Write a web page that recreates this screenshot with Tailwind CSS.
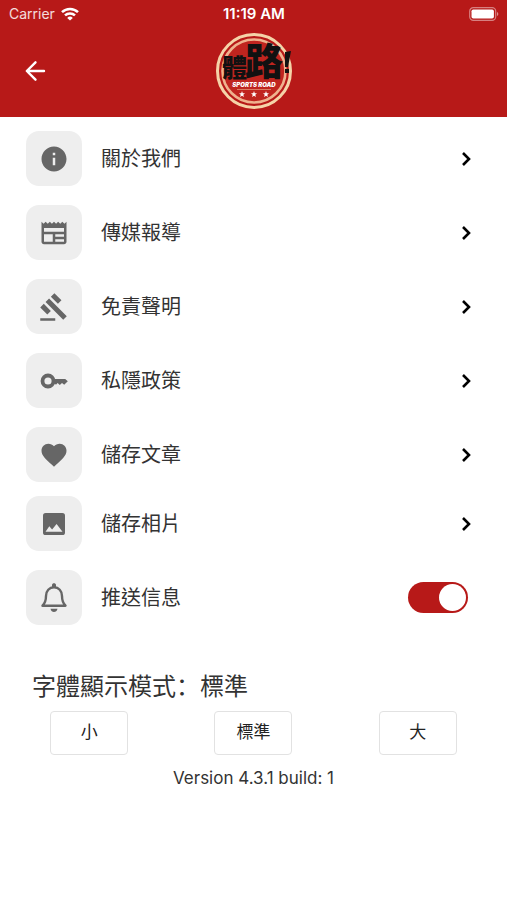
<!DOCTYPE html>
<html lang="zh-Hant">
<head>
    <meta charset="UTF-8">
    <meta name="viewport" content="width=device-width, initial-scale=1.0">
    <script src="https://cdn.jsdelivr.net/npm/@tailwindcss/browser@4"></script>
    <title>體路</title>
</head>
<body class="bg-white text-[#333] font-[Inter,'Noto_Sans_CJK_TC',sans-serif]">

<header class="bg-[#b71918] text-white">
  <!-- status bar -->
  <div class="grid grid-cols-3 items-center h-7 pl-[9px] pr-2 text-sm">
    <div class="flex items-center gap-[6px] text-white/85">
      <span>Carrier</span>
      <svg class="w-[18px] h-[14px]" viewBox="0 0 18 14" fill="none" stroke="white" stroke-width="2.5">
        <path d="M1 5.2a11.4 11.4 0 0 1 16 0M4 8.4a7.2 7.2 0 0 1 10 0"/>
        <path d="M9 13.6 6.2 10.9a4 4 0 0 1 5.6 0z" fill="white" stroke="none"/>
      </svg>
    </div>
    <p class="text-center text-[15px] font-semibold">11:19 AM</p>
    <svg class="justify-self-end w-[30px] h-[14px]" viewBox="0 0 30 14">
      <rect x="0.7" y="0.7" width="26" height="12.6" rx="3.6" fill="none" stroke="white" stroke-opacity=".45" stroke-width="1.2"/>
      <rect x="2.5" y="2.5" width="22.4" height="9" rx="1.8" fill="white"/>
      <path d="M28 5v4c1.8-.8 1.8-3.2 0-4z" fill="white" fill-opacity=".5"/>
    </svg>
  </div>

  <nav class="grid grid-cols-3 items-center px-[21px] pt-[3px] pb-[6px]">
    <button type="button" aria-label="返回" class="justify-self-start">
      <svg class="w-7 h-7" viewBox="0 0 28 28" fill="none" stroke="white" stroke-width="2.4" stroke-linecap="round" stroke-linejoin="round">
        <path d="M23 14H6M14.5 5.3 5.8 14l8.7 8.7"/>
      </svg>
    </button>
    <a href="#" aria-label="體路" class="justify-self-center">
      <svg class="w-20 h-20" viewBox="0 0 80 80">
        <circle cx="40" cy="40" r="36.5" fill="#b71918" stroke="#f5d3a8" stroke-width="3"/>
        <circle cx="40" cy="40" r="31.5" fill="#c0251f" stroke="#efb28e" stroke-width="2.6"/>
        <text x="8" y="46" font-size="25" font-weight="900" font-family="Noto Sans CJK TC" fill="#111">體</text>
        <text x="31" y="44" font-size="38" font-weight="900" font-family="Noto Sans CJK TC" fill="#111">路</text>
        <path d="m71 21 6-1-3 16h-3zM71 38h4v4h-4z" fill="#111"/>
        <text x="40" y="56" text-anchor="middle" font-size="6" font-weight="900" font-style="italic" font-family="Inter" fill="#fff">SPORTS ROAD</text>
        <path d="M23 58.5h34" stroke="#f5d3a8" stroke-opacity=".5"/>
        <path id="star" d="m28 60 .8 2.2 2.2.1-1.7 1.4.6 2.2-1.9-1.2-1.9 1.2.6-2.2-1.7-1.4 2.2-.1z" fill="#fff"/>
        <use href="#star" x="12"/>
        <use href="#star" x="24"/>
      </svg>
    </a>
  </nav>
</header>

<main>
  <ul class="flex flex-col gap-[19px] pt-[14px] pl-[26px] pr-8 text-xl">
    <li>
      <a href="#" class="flex items-center gap-[19px]">
        <span class="grid place-items-center w-14 h-[55px] rounded-[13px] bg-[#eee] text-[#666]">
          <svg class="size-[30px]" viewBox="0 0 24 24" fill="currentColor"><path d="M12 2C6.48 2 2 6.48 2 12s4.48 10 10 10 10-4.48 10-10S17.52 2 12 2zm1 15h-2v-6h2v6zm0-8h-2V7h2v2z"/></svg>
        </span>
        <span class="grow">關於我們</span>
        <svg class="w-4 h-5" viewBox="0 0 16 20" fill="none" stroke="black" stroke-width="2.6"><path d="m4 4 6 6-6 6"/></svg>
      </a>
    </li>
    <li>
      <a href="#" class="flex items-center gap-[19px]">
        <span class="grid place-items-center w-14 h-[55px] rounded-[13px] bg-[#eee] text-[#666]">
          <svg class="size-[30px]" viewBox="0 0 24 24" fill="currentColor"><path d="M22 3l-1.67 1.67L18.67 3 17 4.67 15.33 3l-1.66 1.67L12 3l-1.67 1.67L8.67 3 7 4.67 5.33 3 3.67 4.67 2 3v16c0 1.1.9 2 2 2h16c1.1 0 2-.9 2-2V3zM11 19H4v-6h7v6zm9 0h-7v-2h7v2zm0-4h-7v-2h7v2zm0-4H4V8h16v3z"/></svg>
        </span>
        <span class="grow">傳媒報導</span>
        <svg class="w-4 h-5" viewBox="0 0 16 20" fill="none" stroke="black" stroke-width="2.6"><path d="m4 4 6 6-6 6"/></svg>
      </a>
    </li>
    <li>
      <a href="#" class="flex items-center gap-[19px]">
        <span class="grid place-items-center w-14 h-[55px] rounded-[13px] bg-[#eee] text-[#666]">
          <svg class="size-[30px]" viewBox="0 0 24 24" fill="currentColor"><path d="M1 21h12v2H1zM5.245 8.07l2.83-2.827 14.14 14.142-2.828 2.828zM12.317 1l5.657 5.656-2.83 2.83-5.654-5.66zM3.825 9.485l5.657 5.657-2.828 2.828-5.657-5.657z"/></svg>
        </span>
        <span class="grow">免責聲明</span>
        <svg class="w-4 h-5" viewBox="0 0 16 20" fill="none" stroke="black" stroke-width="2.6"><path d="m4 4 6 6-6 6"/></svg>
      </a>
    </li>
    <li>
      <a href="#" class="flex items-center gap-[19px]">
        <span class="grid place-items-center w-14 h-[55px] rounded-[13px] bg-[#eee] text-[#666]">
          <svg class="size-[30px]" viewBox="0 0 30 30" fill="currentColor">
            <circle cx="9" cy="15" r="5.5" fill="none" stroke="currentColor" stroke-width="3.8"/>
            <path d="M15 13h11.200l2.600 2.200-3.600 3.600-2.200-1.900-2.200 2.200-2.200-2-1.600 1.600-1.400-1.300H15z"/>
          </svg>
        </span>
        <span class="grow">私隱政策</span>
        <svg class="w-4 h-5" viewBox="0 0 16 20" fill="none" stroke="black" stroke-width="2.6"><path d="m4 4 6 6-6 6"/></svg>
      </a>
    </li>
    <li>
      <a href="#" class="flex items-center gap-[19px]">
        <span class="grid place-items-center w-14 h-[55px] rounded-[13px] bg-[#eee] text-[#666]">
          <svg class="size-[30px]" viewBox="0 0 24 24" fill="currentColor"><path d="M12 21.35l-1.45-1.32C5.4 15.36 2 12.28 2 8.5 2 5.42 4.42 3 7.5 3c1.74 0 3.41.81 4.5 2.09C13.09 3.81 14.76 3 16.5 3 19.58 3 22 5.42 22 8.5c0 3.78-3.4 6.86-8.55 11.54L12 21.35z"/></svg>
        </span>
        <span class="grow">儲存文章</span>
        <svg class="w-4 h-5" viewBox="0 0 16 20" fill="none" stroke="black" stroke-width="2.6"><path d="m4 4 6 6-6 6"/></svg>
      </a>
    </li>
  </ul>

  <ul class="flex flex-col gap-[19px] pt-[14px] pl-[26px] pr-8 text-xl">
    <li>
      <a href="#" class="flex items-center gap-[19px]">
        <span class="grid place-items-center w-14 h-[55px] rounded-[13px] bg-[#eee] text-[#666]">
          <svg class="size-[30px]" viewBox="0 0 30 30">
            <rect x="4" y="4" width="22" height="22" rx="2.6" fill="currentColor"/>
            <path d="m6.500 22.700 3.800-5.500 2.800 3.200 4.500-5.500 5.900 7.800z" fill="#eee"/>
          </svg>
        </span>
        <span class="grow">儲存相片</span>
        <svg class="w-4 h-5" viewBox="0 0 16 20" fill="none" stroke="black" stroke-width="2.6"><path d="m4 4 6 6-6 6"/></svg>
      </a>
    </li>
    <li class="flex items-center gap-[19px]">
      <span class="grid place-items-center w-14 h-[55px] rounded-[13px] bg-[#eee] text-[#666]">
        <svg class="size-[30px]" viewBox="0 0 30 30" fill="none" stroke="currentColor" stroke-width="2.4">
          <path d="M3.500 22.700c3-3 3.500-5 3.500-9.700 0-5.200 3.300-8.700 8-8.700s8 3.500 8 8.700c0 4.700.5 6.700 3.500 9.700z" stroke-linejoin="round"/>
          <path d="M11.500 25.700h7c-.8 4.300-6.200 4.300-7 0zM13 4V2c0-2.200 4-2.200 4 0v2z" fill="currentColor" stroke="none"/>
        </svg>
      </span>
      <label for="push" class="grow">推送信息</label>
      <input id="push" type="checkbox" role="switch" checked class="appearance-none w-[60px] h-[31px] mr-[7px] rounded-full bg-[#999] p-[2px] checked:bg-[#b71918] before:block before:size-[27px] before:rounded-full before:bg-white checked:before:ml-auto">
    </li>
  </ul>

  <section class="mt-[42px]">
    <h2 class="pl-8 text-2xl leading-9">字體顯示模式<span class="font-['Noto_Sans_CJK_SC',sans-serif]" lang="zh-Hans">：</span>標準</h2>
    <div class="grid grid-cols-3 justify-items-center px-[7px] mt-[6px] text-[17px] text-[#222]">
      <button type="button" class="w-[78px] h-11 rounded border border-[#e2e2e2]">小</button>
      <button type="button" class="w-[78px] h-11 rounded border border-[#e2e2e2]">標準</button>
      <button type="button" class="w-[78px] h-11 rounded border border-[#e2e2e2]">大</button>
    </div>
    <p class="mt-[11px] text-center text-[17px] leading-6">Version 4.3.1 build: 1</p>
  </section>
</main>

</body>
</html>
